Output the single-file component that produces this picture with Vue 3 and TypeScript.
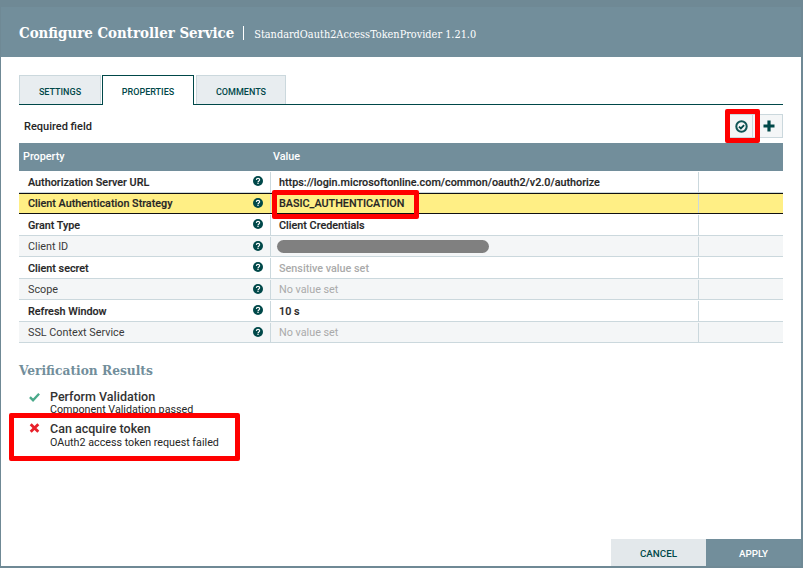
<script setup lang="ts">
interface Row { name: string; value: string; required: boolean; kind: 'strong' | 'muted' | 'redacted' }
const rows: Row[] = [
  { name: 'Authorization Server URL', value: 'https://login.microsoftonline.com/common/oauth2/v2.0/authorize', required: true, kind: 'strong' },
  { name: 'Client Authentication Strategy', value: 'BASIC_AUTHENTICATION', required: true, kind: 'strong' },
  { name: 'Grant Type', value: 'Client Credentials', required: true, kind: 'strong' },
  { name: 'Client ID', value: '', required: false, kind: 'redacted' },
  { name: 'Client secret', value: 'Sensitive value set', required: true, kind: 'muted' },
  { name: 'Scope', value: 'No value set', required: false, kind: 'muted' },
  { name: 'Refresh Window', value: '10 s', required: true, kind: 'strong' },
  { name: 'SSL Context Service', value: 'No value set', required: false, kind: 'muted' },
]
</script>

<template>
  <div class="stage">
    <div class="dialog">
      <header class="head">
        <span class="title">Configure Controller Service</span>
        <span class="sub">StandardOauth2AccessTokenProvider 1.21.0</span>
      </header>
      <div class="body">
        <nav class="tabs">
          <div class="tab t1">SETTINGS</div>
          <div class="tab active">PROPERTIES</div>
          <div class="tab t3">COMMENTS</div>
        </nav>
        <div class="toolbar">
          <span class="req">Required field</span>
          <div class="tools">
            <button class="tool check">
              <svg width="13" height="13" viewBox="0 0 13 13"><circle cx="6.5" cy="6.5" r="5.2" fill="none" stroke="#0f5556" stroke-width="2"/><path d="M4 6.600l1.900 1.900 3.200-3.300" fill="none" stroke="#004849" stroke-width="1.800"/></svg>
            </button>
            <button class="tool plus">
              <svg width="12" height="12" viewBox="0 0 12 12"><path d="M0.500 6h11M6 0.500v11" stroke="#004849" stroke-width="3.200"/></svg>
            </button>
          </div>
        </div>
        <div class="table">
          <div class="thead"><div class="c1">Property</div><div class="c2">Value</div></div>
          <div
            v-for="(r, i) in rows"
            :key="r.name"
            class="row"
            :class="{ alt: i % 2 === 1, hl: i === 1 }"
          >
            <div class="c1 name" :class="{ bold: r.required }">
              <span class="label">{{ r.name }}</span>
              <svg class="help" width="10" height="10" viewBox="0 0 10 10">
                <circle cx="5" cy="5" r="5" fill="#004849"/>
                <path d="M3.300 3.900C3.400 2.900 4.100 2.400 5 2.400c1 0 1.700.6 1.700 1.400 0 1.200-1.700 1.200-1.700 2.400" fill="none" stroke="#fff" stroke-width="1.100"/>
                <rect x="4.400" y="6.800" width="1.200" height="1.200" fill="#fff"/>
              </svg>
            </div>
            <div class="c2 val" :class="r.kind">
              <span v-if="r.kind === 'redacted'" class="pill"></span>
              <template v-else>{{ r.value }}</template>
            </div>
            <div class="c3"></div>
          </div>
        </div>
        <h2 class="vh">Verification Results</h2>
        <div class="result">
          <svg class="ico" width="12" height="10" viewBox="0 0 12 10"><path d="M1 5.200l3.400 3.300L11 1.500" fill="none" stroke="#4aa98a" stroke-width="2.600"/></svg>
          <div><div class="rt">Perform Validation</div><div class="rd">Component Validation passed</div></div>
        </div>
        <div class="result second">
          <svg class="ico" width="10" height="10" viewBox="0 0 10 10"><path d="M1.200 1.200l7.600 7.600M8.800 1.200l-7.600 7.600" fill="none" stroke="#e8202a" stroke-width="2.800"/></svg>
          <div><div class="rt">Can acquire token</div><div class="rd">OAuth2 access token request failed</div></div>
        </div>
      </div>
      <footer class="foot">
        <button class="btn cancel">CANCEL</button>
        <button class="btn apply">APPLY</button>
      </footer>
    </div>
    <div class="mark m1"></div>
    <div class="mark m2"></div>
    <div class="mark m3"></div>
  </div>
</template>

<style>
html, body { margin: 0; background: #718b98; }
</style>

<style scoped>
.stage { position: relative; width: 803px; height: 568px; overflow: hidden; background: #6f8995; font-family: Roboto, "Liberation Sans", sans-serif; box-sizing: border-box; padding: 7px 2px 2px 1px; }
.dialog { height: 559px; display: flex; flex-direction: column; background: #fff; }
.head { height: 50px; background: #728e9b; color: #fff; display: flex; align-items: center; padding-left: 18px; flex: none; box-sizing: border-box; padding-top: 1px; }
.title { font-family: "DejaVu Serif", serif; font-stretch: condensed; font-weight: 700; font-size: 14.9px; padding-right: 10px; margin-right: 10px; line-height: 14px; position: relative; }
.title::after { content: ""; position: absolute; right: 0; top: 0; width: 1px; height: 14px; background: #fff; }
.sub { font-family: "DejaVu Serif", serif; font-stretch: condensed; font-size: 10.85px; margin-top: 3px; }
.body { flex: 1; padding: 18px 18px 0; display: flex; flex-direction: column; min-height: 0; }
.tabs { display: flex; height: 30px; box-sizing: border-box; border-bottom: 1px solid #004849; flex: none; width: 764px; }
.tab { height: 29px; box-sizing: border-box; border: 1px solid #cbd8dd; border-bottom: none; background: #e8edf0; color: #004849; font-size: 9px; font-weight: 500; display: flex; align-items: center; justify-content: center; padding-top: 3px; }
.t1 { width: 82px; }
.active { width: 92px; margin-left: 1px; height: 30px; background: #fff; border: 1px solid #004849; border-bottom: none; padding-top: 2px; }
.t3 { width: 90px; margin-left: 2px; }
.toolbar { height: 38px; display: flex; justify-content: space-between; align-items: center; width: 764px; flex: none; box-sizing: border-box; padding: 3px 0 0 5px; }
.req { font-size: 11px; font-weight: 500; color: #262626; margin-top: 2px; }
.tools { display: flex; margin-top: 1px; }
.tool { height: 24px; padding: 0; display: flex; align-items: center; justify-content: center; border: 1px solid #cbd8dd; background: #f4f6f7; border-radius: 0; }
.check { width: 24px; }
.plus { width: 30px; border-left: none; padding-left: 2px; }
.table { width: 764px; flex: none; }
.thead { height: 28px; background: #728e9b; color: #fff; display: flex; align-items: center; font-size: 10.8px; font-weight: 500; padding-bottom: 2px; box-sizing: border-box; }
.thead .c1 { width: 251px; padding-left: 4px; box-sizing: border-box; }
.thead .c2 { padding-left: 3px; }
.row { height: 21.5px; display: flex; border-bottom: 1px solid #cbd8dd; box-sizing: border-box; font-size: 10.8px; color: #262626; background: #fff; padding-top: 1px; }
.row.alt { background: #f4f6f7; }
.row.hl { background: #ffef85; border-top: 1px solid #111; border-bottom: 1px solid #111; padding-top: 0; }
.row:not(.alt):not(.hl) .label, .row:not(.alt):not(.hl) .val { padding-top: 1px; }
.c1.name { width: 252px; box-sizing: border-box; padding: 0 7px 0 9px; display: flex; align-items: center; justify-content: space-between; border-right: 1px solid #cbd8dd; font-weight: 400; color: #3a3a3a; }
.name.bold { font-weight: 500; color: #262626; -webkit-text-stroke: 0.15px #262626; }
.help { flex: none; margin-top: -1px; }
.c2.val { width: 428px; box-sizing: border-box; padding-left: 8px; display: flex; align-items: center; border-right: 1px solid #cbd8dd; }
.val.strong { font-weight: 500; color: #262626; -webkit-text-stroke: 0.15px #262626; }
.val.muted { color: #aaa; }
.row:nth-child(6) .val { font-weight: 500; }
.pill { width: 212px; height: 13px; border-radius: 7px; background: #808080; margin-left: -2px; }
.c3 { flex: 1; }
.vh { font-family: "DejaVu Serif", serif; font-stretch: condensed; font-size: 13.6px; font-weight: 700; color: #728e9b; margin: 19px 0 0; line-height: 16px; }
.result { display: flex; margin-top: 12px; padding-left: 10px; }
.result.second { margin-top: 7px; }
.second .ico { margin-top: 1px; }
.second .rd { margin-top: 2px; }
.ico { flex: none; margin-top: 2px; }
.result .ico { width: 11px; margin-right: 10px; }
.rt { font-size: 12.5px; line-height: 13px; color: #333; font-weight: 500; }
.rd { font-size: 10.72px; line-height: 11px; color: #262626; margin-top: 1px; }
.foot { flex: none; display: flex; justify-content: flex-end; height: 27px; }
.btn { width: 95px; height: 27px; border: none; border-radius: 0; padding: 2px 0 0; font-family: inherit; font-size: 9.8px; font-weight: 500; }
.cancel { background: #e3e8eb; color: #004849; }
.apply { background: #728e9b; color: #fff; }
.mark { position: absolute; border: 5px solid #f00; border-radius: 2px; box-sizing: border-box; }
.m1 { left: 725px; top: 109px; width: 35px; height: 34px; }
.m2 { left: 272px; top: 190px; width: 147px; height: 29px; }
.m3 { left: 9px; top: 413px; width: 231px; height: 48px; }
</style>
